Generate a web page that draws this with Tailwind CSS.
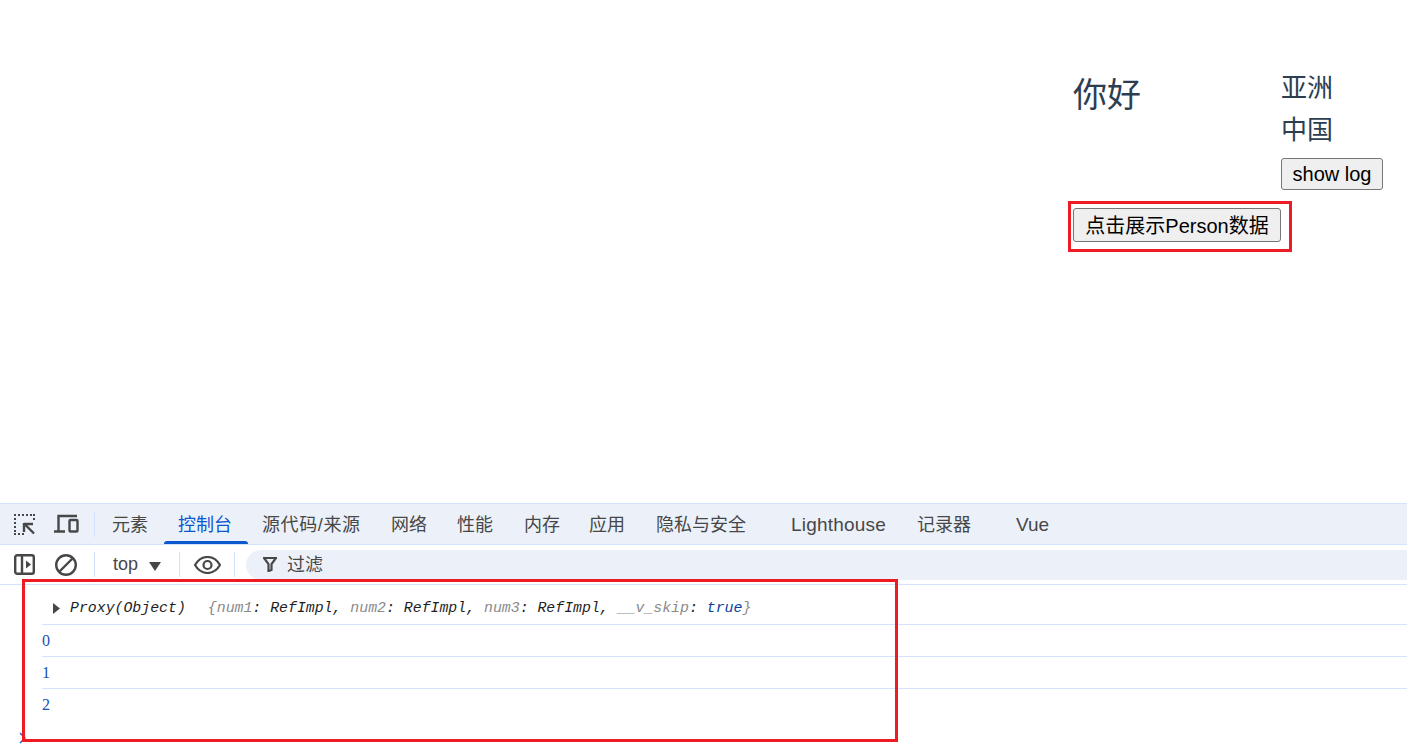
<!DOCTYPE html>
<html lang="zh">
<head>
  <meta charset="utf-8">
  <title>Console</title>
  <script src="https://cdn.jsdelivr.net/npm/@tailwindcss/browser@4"></script>
</head>
<body class="relative h-[749px] w-[1407px] overflow-hidden bg-white font-['Liberation_Sans','Noto_Sans_CJK_SC',sans-serif]">
  <!-- page -->
  <main class="h-[503px] pl-[1073px] pt-[67px] text-[#2c3e50]">
    <div class="flex">
      <div class="w-[208px] pt-[3px] pb-[1px] text-[34px] leading-[50px]">你好</div>
      <div>
        <div class="text-[26px] leading-[42px]">亚洲</div>
        <div class="text-[26px] leading-[42px]">中国</div>
        <button class="mt-[7px] block h-[32px] w-[102px] rounded-[3px] border border-[#767676] bg-[#efefef] text-center text-[20px] leading-[28px] text-black">show log</button>
      </div>
    </div>
    <button class="mt-[18px] block h-[34px] w-[208px] rounded-[3px] border border-[#767676] bg-[#efefef] pt-[2px] text-center text-[20px] leading-[30px] whitespace-nowrap text-black">点击展示Person数据</button>
  </main>

  <!-- devtools -->
  <section class="h-[246px] border-t border-[#d3e3fd] text-[18px] text-[#474747]">
    <div class="flex h-[41px] items-center border-b border-[#d3e3fd] bg-[#ecf1f9]">
      <svg class="ml-[14px] h-[21px] w-[21px]" viewBox="0 0 21 21" fill="#474747">
        <path d="M0 0h2v2H0zM4 0h2v2H4zM8 0h2v2H8zM12 0h2v2h-2zM16 0h2v2h-2zM19 0h2v2h-2zM19 4h2v2h-2zM0 4h2v2H0zM0 8h2v2H0zM0 12h2v2H0zM0 16h2v2H0zM0 19h2v2H0zM4 19h2v2H4zM8 19h2v2H8z"/>
        <path d="M10 10h9M10 9v9M10 9.500l10 10" fill="none" stroke="#474747" stroke-width="2.400"/>
      </svg>
      <svg class="ml-[19px] h-[20px] w-[25px]" viewBox="0 0 25 20" fill="none" stroke="#474747" stroke-width="2.400">
        <path d="M4.500 17V2H23M0 17.500h11"/>
        <rect x="15.500" y="6" width="8" height="11.500" rx="1"/>
      </svg>
      <div class="ml-[15px] h-[25px] w-px bg-[#d3e3fd]"></div>
      <nav class="ml-[17px] flex h-full items-center whitespace-nowrap pt-[2px]">
        <span class="w-[66px]">元素</span>
        <span class="relative flex h-full w-[84px] items-center text-[#0b57d0]">控制台<span class="absolute -left-[14px] bottom-0 h-[3px] w-[84px] rounded-t-[3px] bg-[#0b57d0]"></span></span>
        <span class="w-[129px] tracking-[0.6px]">源代码/来源</span>
        <span class="w-[66px]">网络</span>
        <span class="w-[67px]">性能</span>
        <span class="w-[65px]">内存</span>
        <span class="w-[67px]">应用</span>
        <span class="w-[135px]">隐私与安全</span>
        <span class="w-[126px] text-[19px] tracking-[0.2px]">Lighthouse</span>
        <span class="w-[99px]">记录器</span>
        <span class="text-[19px]">Vue</span>
      </nav>
    </div>
    <div class="flex h-[40px] items-center border-b border-[#d3e3fd] bg-white">
      <svg class="ml-[14px] h-[21px] w-[21px]" viewBox="0 0 21 21" fill="none" stroke="#474747" stroke-width="2.400">
        <rect x="1.200" y="1.200" width="18.600" height="18.600" rx="2"/>
        <path d="M8 2v17"/>
        <path d="M12 6.500l5 4-5 4z" fill="#474747" stroke="none"/>
      </svg>
      <svg class="ml-[20px] h-[22px] w-[22px]" viewBox="0 0 22 22" fill="none" stroke="#474747" stroke-width="2.400">
        <circle cx="11" cy="11" r="9.800"/>
        <path d="M4 18L18 4"/>
      </svg>
      <div class="ml-[17px] h-[25px] w-px bg-[#d3e3fd]"></div>
      <div class="ml-[18px] flex w-[66px] items-center">top<svg class="ml-[11px] mt-[4px] h-[9px] w-[12px]" viewBox="0 0 12 9" fill="#474747"><path d="M0 0h12L6 9z"/></svg></div>
      <div class="h-[25px] w-px bg-[#d3e3fd]"></div>
      <svg class="ml-[14px] h-[18px] w-[27px]" viewBox="0 0 27 18" fill="none" stroke="#474747" stroke-width="2.200">
        <path d="M1 9c3-5 7-8 12.500-8S23 4 26 9c-3 5-7 8-12.500 8S4 14 1 9z"/>
        <circle cx="13.500" cy="9" r="4"/>
      </svg>
      <div class="ml-[13px] h-[25px] w-px bg-[#d3e3fd]"></div>
      <div class="ml-[11px] flex h-[30px] flex-1 items-center rounded-l-[15px] bg-[#ecf1f9] pl-[17px]">
        <svg class="h-[15px] w-[14px]" viewBox="0 0 14 15" fill="none" stroke="#474747" stroke-width="2.200"><path d="M1 1h12L8.500 7v6l-3 1V7z"/></svg>
        <span class="ml-[10px] pt-[2px]">过滤</span>
      </div>
    </div>

    <!-- console output -->
    <div class="font-['Liberation_Mono','Noto_Sans_CJK_SC',monospace] text-[14.850px] italic">
      <div class="ml-[42px] flex h-[40px] items-center border-b border-[#d3e3fd] pt-[7px] whitespace-pre text-[#1f1f1f]">
        <svg class="ml-[11px] mr-[10px] h-[11px] w-[7px]" viewBox="0 0 7 11" fill="#474747"><path d="M0 0l7 5.500L0 11z"/></svg><span>Proxy(Object)</span><span class="ml-[22px]"><span class="text-[#8a8a8a]">{num1</span>: RefImpl, <span class="text-[#8a8a8a]">num2</span>: RefImpl, <span class="text-[#8a8a8a]">num3</span>: RefImpl, <span class="text-[#8a8a8a]">__v_skip</span>: <span class="text-[#0842a0]">true</span><span class="text-[#8a8a8a]">}</span></span>
      </div>
      <div class="ml-[42px] flex h-[32px] items-center border-b border-[#d3e3fd] font-['Liberation_Serif',serif] text-[16px] not-italic text-[#1a4fb5]">0</div>
      <div class="ml-[42px] flex h-[32px] items-center border-b border-[#d3e3fd] font-['Liberation_Serif',serif] text-[16px] not-italic text-[#1a4fb5]">1</div>
      <div class="ml-[42px] flex h-[32px] items-center font-['Liberation_Serif',serif] text-[16px] not-italic text-[#1a4fb5]">2</div>
    </div>
  </section>

  <!-- prompt chevron peeking out under the annotation -->
  <svg class="absolute left-[19px] top-[732px] h-[12px] w-[7px]" viewBox="0 0 7 12" fill="none" stroke="#1a6be0" stroke-width="1.500"><path d="M1 1l5 5-5 5"/></svg>

  <!-- red annotation boxes -->
  <div class="absolute left-[1068px] top-[201px] h-[51px] w-[224px] border-[3px] border-[#ed1c24]"></div>
  <div class="absolute left-[22px] top-[579px] h-[163px] w-[876px] border-[3px] border-[#ed1c24]"></div>
</body>
</html>
